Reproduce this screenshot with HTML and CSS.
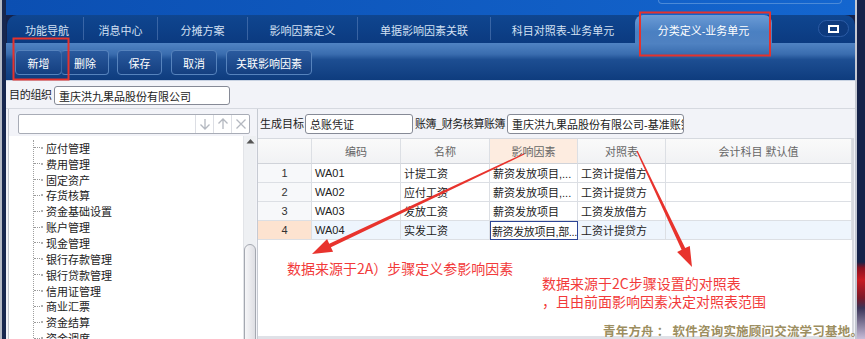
FILE: index.html
```html
<!DOCTYPE html>
<html lang="zh">
<head>
<meta charset="utf-8">
<link rel="stylesheet" href="styles.css">
</head>
<body>
<div class="frame">
  <div class="edge-left"></div>
  <div class="main">
    <div class="topbar"><div class="topsearch"></div></div>
    <div class="tabbar">
      <div class="tab first" style="width:72px">功能导航</div>
      <div class="tab" style="width:74px">消息中心</div>
      <div class="tab" style="width:90px">分摊方案</div>
      <div class="tab" style="width:110px">影响因素定义</div>
      <div class="tab" style="width:133px">单据影响因素关联</div>
      <div class="tab" style="width:145px">科目对照表-业务单元</div>
      <div class="tab active" style="width:137px">分类定义-业务单元</div>
      <div class="spacer"></div>
      <div class="winbtn"><span class="sq"></span></div>
    </div>
    <div class="toolbar">
      <div class="btngroup">
        <div class="btn">新增</div>
        <div class="btn">删除</div>
      </div>
      <div class="btn single w45">保存</div>
      <div class="btn single w46">取消</div>
      <div class="btn single w86">关联影响因素</div>
    </div>
    <div class="content">
      <div class="orgrow">
        <span class="lbl">目的组织</span>
        <div class="input org">重庆洪九果品股份有限公司</div>
      </div>
      <div class="split">
        <div class="leftpanel">
          <div class="searchrow">
            <div class="searchbox">
              <div class="sfield"></div>
              <div class="sbtn"><svg width="12" height="12" viewBox="0 0 12 12"><path d="M6 1v10M1.5 6.5L6 11l4.5-4.5" fill="none" stroke="#b4b8c0" stroke-width="1.3"/></svg></div>
              <div class="sbtn"><svg width="12" height="12" viewBox="0 0 12 12"><path d="M6 11V1M1.5 5.5L6 1l4.5 4.5" fill="none" stroke="#b4b8c0" stroke-width="1.3"/></svg></div>
              <div class="sbtn"><svg width="12" height="12" viewBox="0 0 12 12"><path d="M1.5 1.5l9 9M10.5 1.5l-9 9" fill="none" stroke="#b4b8c0" stroke-width="1.3"/></svg></div>
            </div>
          </div>
          <div class="treearea">
            <ul class="tree">
              <li><span class="dash"></span><span class="dot"></span>应付管理</li>
              <li><span class="dash"></span><span class="dot"></span>费用管理</li>
              <li><span class="dash"></span><span class="dot"></span>固定资产</li>
              <li><span class="dash"></span><span class="dot"></span>存货核算</li>
              <li><span class="dash"></span><span class="dot"></span>资金基础设置</li>
              <li><span class="dash"></span><span class="dot"></span>账户管理</li>
              <li><span class="dash"></span><span class="dot"></span>现金管理</li>
              <li><span class="dash"></span><span class="dot"></span>银行存款管理</li>
              <li><span class="dash"></span><span class="dot"></span>银行贷款管理</li>
              <li><span class="dash"></span><span class="dot"></span>信用证管理</li>
              <li><span class="dash"></span><span class="dot"></span>商业汇票</li>
              <li><span class="dash"></span><span class="dot"></span>资金结算</li>
              <li><span class="dash"></span><span class="dot"></span>资金调度</li>
            </ul>
            <div class="vscroll">
              <div class="vup"><svg width="9" height="6" viewBox="0 0 9 6"><path d="M0.5 5.5L4.5 1l4 4.5z" fill="#555"/></svg></div>
              <div class="vtrack"><div class="vthumb"></div></div>
            </div>
          </div>
        </div>
        <div class="rightpanel">
          <div class="genrow">
            <span class="lbl">生成目标</span>
            <div class="input gen">总账凭证</div>
            <span class="lbl tight">账簿_财务核算账簿</span>
            <div class="input book">重庆洪九果品股份有限公司-基准账簿</div>
          </div>
          <div class="gridwrap">
            <div class="grid">
              <div class="hc"></div>
              <div class="hc">编码</div>
              <div class="hc">名称</div>
              <div class="hc hot">影响因素</div>
              <div class="hc">对照表</div>
              <div class="hc">会计科目 默认值</div>

              <div class="c num">1</div>
              <div class="c">WA01</div>
              <div class="c">计提工资</div>
              <div class="c">薪资发放项目,...</div>
              <div class="c">工资计提借方</div>
              <div class="c"></div>

              <div class="c num">2</div>
              <div class="c">WA02</div>
              <div class="c">应付工资</div>
              <div class="c">薪资发放项目,...</div>
              <div class="c">工资计提贷方</div>
              <div class="c"></div>

              <div class="c num">3</div>
              <div class="c">WA03</div>
              <div class="c">发放工资</div>
              <div class="c">薪资发放项目</div>
              <div class="c">工资发放借方</div>
              <div class="c"></div>

              <div class="c num cur">4</div>
              <div class="c sel">WA04</div>
              <div class="c sel">实发工资</div>
              <div class="c sel edit">薪资发放项目,部...</div>
              <div class="c sel">工资计提贷方</div>
              <div class="c sel"></div>
            </div>
          </div>
        </div>
      </div>
    </div>
  </div>
  <div class="edge-right"></div>
</div>

<svg class="overlay" width="865" height="339" viewBox="0 0 865 339">
  <rect x="13.5" y="38.5" width="55" height="41" fill="none" stroke="#e5322c" stroke-width="2"/>
  <rect x="640" y="12.5" width="130" height="43" fill="none" stroke="#e5322c" stroke-width="2"/>
  <polygon points="523.7,153.4 329.2,243.7 327.1,239.1 312,254 333.1,251.8 330.9,247.3 524.3,154.6" fill="#e8332d"/>
  <polygon points="637.6,150.7 685.2,248.1 689.8,245.9 692,267 677.1,251.9 681.6,249.8 636.4,151.3" fill="#e8332d"/>
</svg>
<div class="note note1">数据来源于2A）步骤定义参影响因素</div>
<div class="note note2"><div>数据来源于2C步骤设置的对照表</div><div>，且由前面影响因素决定对照表范围</div></div>
<div class="watermark">青年方舟 ： 软件咨询实施顾问交流学习基地。</div>
</body>
</html>
```

FILE: styles.css
```css
* { box-sizing: border-box; }
html, body { margin: 0; padding: 0; }
body {
  width: 865px;
  height: 339px;
  overflow: hidden;
  position: relative;
  font-family: "Liberation Sans", "Noto Sans CJK SC", sans-serif;
  font-size: 11px;
  color: #222;
  background: #15224a;
}
.frame { display: flex; height: 339px; }
.edge-left {
  width: 6px;
  background: linear-gradient(90deg, #b4bac6 0, #b4bac6 2px, #17274f 2px, #17274f 6px);
}
.edge-right {
  width: 10px;
  background:
    linear-gradient(90deg, #c4c8d2 0, #c4c8d2 2px, transparent 2px),
    linear-gradient(#15224a 0, #15224a 262px, #8a1020 268px, #c81a22 280px, #7a1828 298px, #3a3458 308px, #c8bcd8 339px);
}
.main { width: 849px; display: flex; flex-direction: column; }

.topbar {
  height: 15px;
  background: linear-gradient(90deg, #0b4fb2, #1466cf);
  display: flex;
  justify-content: flex-end;
}
.topsearch {
  width: 184px;
  height: 4px;
  margin-right: 13px;
  border: 1px solid #4b8ad8;
  border-top: none;
  border-radius: 0 0 6px 6px;
}
.tabbar {
  height: 28px;
  margin-left: 1px;
  padding-left: 4px;
  background: linear-gradient(#0f4690, #0b3a80);
  border-radius: 10px 10px 0 0;
  display: flex;
}
.tab {
  display: flex;
  align-items: center;
  justify-content: center;
  color: #d3e0f3;
  font-size: 11px;
  padding-top: 1px;
  border-left: 1px solid;
  border-image: linear-gradient(transparent 3px, rgba(110, 145, 200, .45) 3px, rgba(110, 145, 200, .45) 24px, transparent 24px) 1;
}
.tab.first { border-left: none; }
.tab.active {
  border: none;
  color: #fff;
  border-radius: 8px 8px 0 0;
  background: linear-gradient(#6b9bd6, #4a80c2 60%, #4f81c1);
}
.spacer { flex: 1; }
.winbtn {
  width: 31px;
  height: 17px;
  margin-top: 5px;
  margin-right: 6px;
  border: 1px solid #2c5ca6;
  border-radius: 9px;
  background: #0d3a7e;
  display: flex;
  align-items: center;
  justify-content: center;
}
.sq { width: 11px; height: 8px; border: 2px solid #fff; }

.toolbar {
  height: 38px;
  padding: 7px 0 0 9px;
  display: flex;
  align-items: flex-start;
  gap: 9px;
  background: linear-gradient(#5083c3 0, #3a6daf 30%, #1d4e92 45%, #0e3c7e 100%);
  border-bottom: 1px solid #c8d2e2;
}
.btngroup { display: flex; margin-right: -1px; }
.btn {
  height: 25px;
  display: flex;
  align-items: center;
  justify-content: center;
  color: #fff;
  font-size: 11px;
  background: linear-gradient(#2a5a9e, #143f80);
  border: 1px solid #5683bd;
  border-radius: 4px;
}
.btngroup .btn:first-child { width: 47px; }
.btngroup .btn:last-child { width: 48px; border-left-color: #3a66a4; margin-left: -1px; }
.w45 { width: 45px; }
.w46 { width: 46px; }
.w86 { width: 86px; }

.content {
  flex: 1;
  display: flex;
  flex-direction: column;
  background: #f2f3f8;
  min-height: 0;
}
.lbl { color: #222; white-space: nowrap; }
.tight { letter-spacing: -0.45px; }
.input {
  background: #fff;
  border: 1px solid #868a96;
  border-radius: 3px;
  display: flex;
  align-items: center;
  padding-left: 4px;
  white-space: nowrap;
  overflow: hidden;
}
.orgrow {
  height: 27px;
  padding: 5px 0 0 3px;
  display: flex;
  align-items: flex-start;
  gap: 0;
}
.orgrow .lbl { line-height: 19px; width: 45px; letter-spacing: -0.3px; }
.input.org { width: 176px; height: 19px; }

.split {
  flex: 1;
  display: flex;
  border-top: 1px solid #d6d9e0;
  min-height: 0;
}
.leftpanel {
  width: 248px;
  margin-left: 2px;
  border-left: 1px solid #c2c6ce;
  display: flex;
  flex-direction: column;
}
.searchrow { height: 27px; padding: 5px 6px 0 9px; }
.searchbox {
  height: 20px;
  border: 1px solid #a8acb6;
  border-radius: 2px;
  background: #fff;
  display: flex;
}
.sfield { flex: 1; }
.sbtn {
  width: 18px;
  border-left: 1px solid #dcdee4;
  display: flex;
  align-items: center;
  justify-content: center;
}
.treearea {
  flex: 1;
  display: flex;
  background: #fff;
  overflow: hidden;
}
.tree {
  list-style: none;
  margin: 4px 0 0 24px;
  padding: 0;
  flex: 1;
  border-left: 1px dotted #a0a0a0;
  align-self: flex-start;
}
.tree li {
  height: 15.85px;
  display: flex;
  align-items: center;
  color: #222;
  white-space: nowrap;
}
.dash { width: 6px; border-top: 1px dotted #9a9a9a; margin-right: 1px; }
.dot { width: 2px; height: 2px; background: #b0b0b0; margin-right: 3px; }
.vscroll {
  width: 13px;
  display: flex;
  flex-direction: column;
  background: #eef0f3;
  border-left: 1px solid #e2e4e8;
}
.vup { height: 12px; display: flex; align-items: center; justify-content: center; padding-top: 2px; }
.vtrack { flex: 1; padding-top: 100px; }
.vthumb {
  height: 200px;
  border: 1px solid #a4a8b0;
  border-radius: 6px 6px 0 0;
  background: linear-gradient(90deg, #f6f6f8, #dedfe4);
}

.rightpanel {
  flex: 1;
  margin-left: 1px;
  border-left: 1px solid #c6cad2;
  display: flex;
  flex-direction: column;
  min-width: 0;
}
.genrow {
  height: 29px;
  padding: 5px 0 0 2px;
  display: flex;
  align-items: flex-start;
}
.genrow .lbl { line-height: 20px; }
.input.gen { width: 108px; height: 20px; margin: 0 2px 0 1px; }
.input.book { width: 177px; height: 20px; margin-left: 2px; }
.gridwrap {
  flex: 1;
  background: #fff;
  width: 596px;
  border-right: 2px solid #d8dae0;
  border-bottom: 3px solid #dfe1e7;
}
.grid {
  display: grid;
  grid-template-columns: 54px 89px 89px 88px 88px 186px;
  grid-template-rows: 25px repeat(4, 19px);
  border-top: 1px solid #d6d9df;
}
.hc {
  display: flex;
  align-items: center;
  justify-content: center;
  color: #666;
  background: linear-gradient(#fafafa, #f1f2f4);
  border-right: 1px solid #dcdfe4;
  border-bottom: 1px solid #d0d3d9;
}
.hc.hot { background: #fdece0; }
.c {
  display: flex;
  align-items: center;
  padding: 0 3px;
  white-space: nowrap;
  overflow: hidden;
  border-right: 1px solid #dcdfe4;
  border-bottom: 1px solid #dcdfe4;
  color: #222;
}
.c.num { justify-content: center; background: #f7f8fa; color: #333; }
.c.num.cur { background: #fde3d0; }
.c.sel { background: #eef5fd; }
.c.edit { border: 1px solid #2d4596; background: #fff; padding-left: 1px; letter-spacing: -0.4px; }

.overlay { position: absolute; left: 0; top: 0; pointer-events: none; }
.note {
  position: absolute;
  color: #f23a3a;
  font-size: 14px;
  font-family: "Noto Sans CJK SC", sans-serif;
  line-height: 18px;
  white-space: nowrap;
}
.note1 { left: 287px; top: 259px; }
.note2 { left: 542px; top: 274px; }
.watermark {
  position: absolute;
  left: 603px;
  top: 322px;
  font-size: 12.5px;
  font-weight: bold;
  letter-spacing: 0.2px;
  color: #9c8e60;
  font-family: "Noto Sans CJK SC", sans-serif;
  line-height: 18px;
  white-space: nowrap;
  text-shadow: 0 0 1px #fff;
}
```
